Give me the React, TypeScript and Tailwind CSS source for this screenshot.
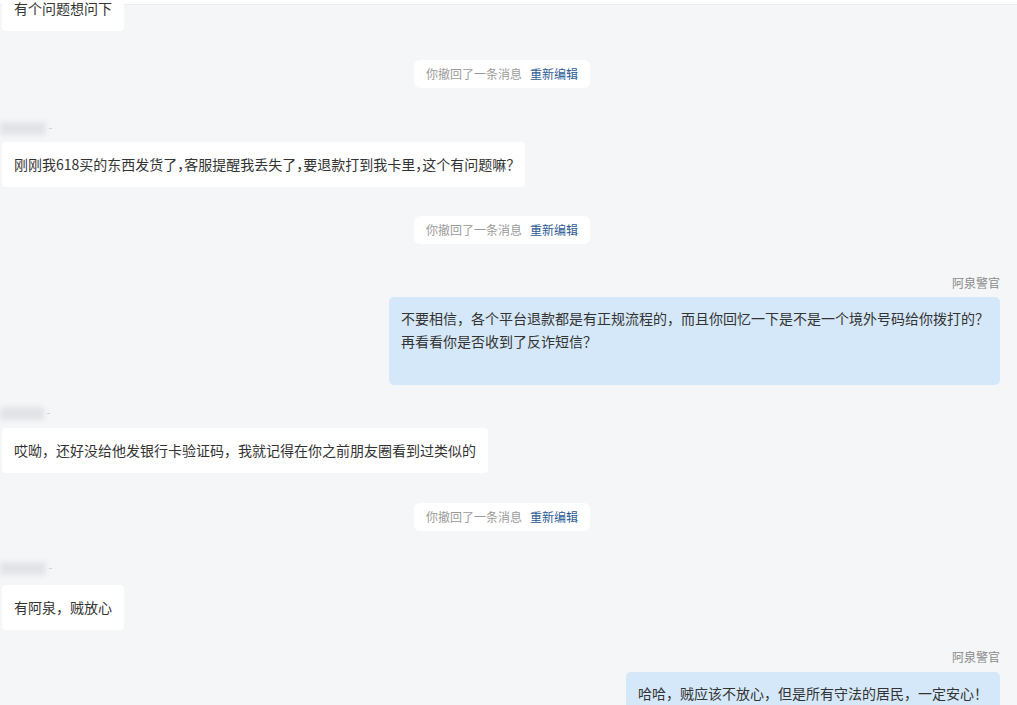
const font = { fontFamily: '"Noto Sans CJK SC", "Noto Sans", sans-serif' };

const LeftBubble = ({ text, className = '' }: { text: string; className?: string }) => (
  <div className={`ml-[2px] self-start whitespace-nowrap rounded-[4px] bg-white px-[12px] py-[11px] text-[14px] leading-[23px] text-[#333] ${className}`}>
    {text}
  </div>
);

const Recall = ({ className = '' }: { className?: string }) => (
  <div className={`flex justify-center ${className}`}>
    <div className="mr-[13px] flex h-[28px] items-center gap-[8px] rounded-[6px] bg-white px-[12px] text-[12px]">
      <span className="text-[#9a9a9a]">你撤回了一条消息</span>
      <span className="text-[#2d5b93]">重新编辑</span>
    </div>
  </div>
);

// sender name is blurred out in the screenshot
const BlurName = ({ className = '', w = 46 }: { className?: string; w?: number }) => (
  <div className={`flex items-center gap-[3px] ${className}`}>
    <div className="h-[13px] rounded-[2px] bg-[#e2e3e6] blur-[2.5px]" style={{ width: w }} />
    <div className="h-[1px] w-[3px] bg-[#d2d2d2]" />
  </div>
);

const RightName = ({ className = '' }: { className?: string }) => (
  <div className={`mr-[17px] self-end text-[12px] leading-[14px] text-[#8a8a8a] ${className}`}>阿泉警官</div>
);

export default function App() {
  return (
    <div style={font} className="relative h-[705px] w-[1017px] overflow-hidden bg-[#f5f6f8]">
      <div className="absolute left-0 right-0 top-0 h-[5px] border-b border-[#eceef0] bg-white" />
      <div className="relative flex flex-col">
        <LeftBubble text="有个问题想问下" className="-mt-[14px]" />
        <Recall className="mt-[29px]" />
        <BlurName className="mt-[32px] h-[16px]" />
        <LeftBubble
          text="刚刚我618买的东西发货了，客服提醒我丢失了，要退款打到我卡里，这个有问题嘛？"
          className="mt-[6px] [font-feature-settings:'halt']"
        />
        <Recall className="mt-[29px]" />
        <RightName className="mt-[32px]" />
        <div className="mr-[17px] mt-[7px] h-[88px] w-[611px] self-end whitespace-nowrap rounded-[5px] bg-[#d5e8f9] px-[12px] pt-[10px] text-[14px] leading-[23px] text-[#333]">
          <div>不要相信，各个平台退款都是有正规流程的，而且你回忆一下是不是一个境外号码给你拨打的？</div>
          <div>再看看你是否收到了反诈短信？</div>
        </div>
        <BlurName className="mt-[19px] h-[18px]" w={44} />
        <LeftBubble text="哎呦，还好没给他发银行卡验证码，我就记得在你之前朋友圈看到过类似的" className="mt-[6px]" />
        <Recall className="mt-[30px]" />
        <BlurName className="mt-[26px] h-[22px]" w={46} />
        <LeftBubble text="有阿泉，贼放心" className="mt-[6px]" />
        <RightName className="mt-[20px]" />
        <div className="mr-[17px] mt-[8px] h-[60px] self-end whitespace-nowrap rounded-[5px] bg-[#d5e8f9] px-[12px] pt-[10px] text-[14px] leading-[23px] text-[#333]">
          哈哈，贼应该不放心，但是所有守法的居民，一定安心！
        </div>
      </div>
    </div>
  );
}
